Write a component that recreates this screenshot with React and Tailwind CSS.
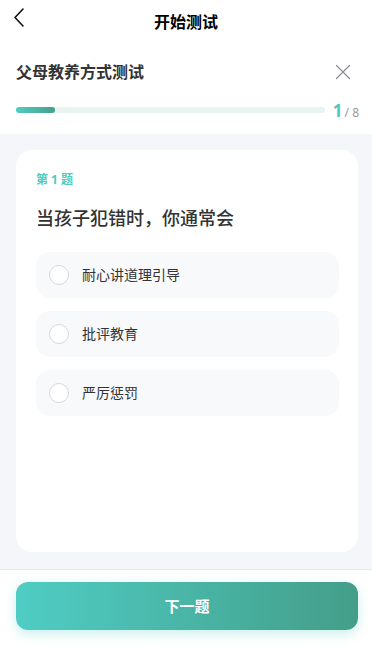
import React from "react";

const font = { fontFamily: '"Noto Sans", "Noto Sans CJK SC", sans-serif' };

function Option({ label }) {
  return (
    <div className="flex h-[46px] items-center rounded-[14px] bg-[#f8f9fb] pl-[13px]">
      <div className="h-[20px] w-[20px] rounded-full border border-[#d6d8dc] bg-white" />
      <span className="ml-[13px] text-[14px] leading-none text-[#333]">{label}</span>
    </div>
  );
}

export default function App() {
  return (
    <div className="flex h-[661px] w-[372px] flex-col bg-[#f5f6fa]" style={font}>
      <div className="bg-white">
        <div className="relative flex h-[44px] items-center justify-center">
          <svg className="absolute left-[12px] top-[7px]" width="14" height="22" viewBox="0 0 14 22" fill="none">
            <path d="M11 2 L3 10.5 L11 19" stroke="#111" strokeWidth="1.6" strokeLinecap="round" strokeLinejoin="round" />
          </svg>
          <span className="text-[16px] font-bold leading-none text-black">开始测试</span>
        </div>
        <div className="flex h-[56px] items-center justify-between pl-[16px] pr-[21px]">
          <span className="text-[16px] font-bold text-[#333]">父母教养方式测试</span>
          <svg width="16" height="16" viewBox="0 0 16 16" fill="none">
            <path d="M1.5 1.5 L14.5 14.5 M14.5 1.5 L1.5 14.5" stroke="#8e8e93" strokeWidth="1.3" strokeLinecap="round" />
          </svg>
        </div>
        <div className="flex h-[34px] items-start pl-[16px] pr-[13px] pt-[2px]">
          <div className="mt-[5px] h-[6px] flex-1 rounded-full bg-[#e6f4f2]">
            <div className="h-full w-[39px] rounded-full bg-gradient-to-r from-[#4fcdc2] to-[#45a089]" />
          </div>
          <div className="ml-[8px] flex shrink-0 items-baseline whitespace-nowrap leading-none">
            <span className="text-[17px] font-bold text-[#4ccbbf]">1</span>
            <span className="ml-[2px] text-[12px] text-[#999]">/ 8</span>
          </div>
        </div>
      </div>

      <div className="flex-1 pl-[16px] pr-[14px] pt-[16px]">
        <div className="h-[402px] rounded-[16px] bg-white pl-[20px] pr-[19px] pt-[24px]">
          <div className="text-[12px] font-bold leading-none text-[#4ccbbf]">第 1 题</div>
          <div className="mt-[23px] text-[18px] font-medium leading-none text-[#333]">当孩子犯错时，你通常会</div>
          <div className="mt-[25px] flex flex-col gap-[13px]">
            <Option label="耐心讲道理引导" />
            <Option label="批评教育" />
            <Option label="严厉惩罚" />
          </div>
        </div>
      </div>

      <div className="h-[92px] border-t border-[#e6e6ec] bg-white pl-[16px] pr-[14px] pt-[12px]">
        <button className="flex h-[48px] w-full items-center justify-center rounded-[12px] bg-gradient-to-r from-[#4fcdc4] to-[#439e89] text-[15px] font-bold text-white shadow-[0_4px_12px_rgba(79,205,196,0.3)]">
          下一题
        </button>
      </div>
    </div>
  );
}
